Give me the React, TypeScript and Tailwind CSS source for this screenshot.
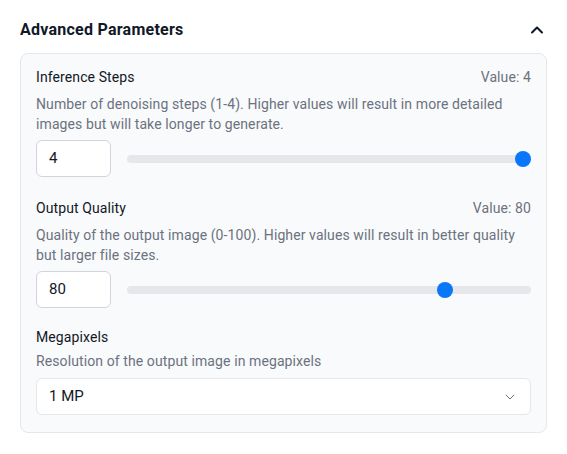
import { ChevronDown, ChevronUp } from "lucide-react";

type SliderProps = {
  value: number;
  min: number;
  max: number;
};

const Slider = ({ value, min, max }: SliderProps) => {
  const pct = ((value - min) / (max - min)) * 100;

  return (
    <div className="relative flex-1 h-2 rounded-full bg-[#e5e7eb]">
      <div
        className="absolute top-1/2 -translate-y-1/2 size-4 rounded-full bg-[#0a76fa]"
        style={{ left: `calc(${pct}% - ${(pct * 16) / 100}px)` }}
      />
    </div>
  );
};

type ParamProps = {
  label: string;
  description: string;
  value: number;
  min: number;
  max: number;
  className?: string;
};

const NumberParam = ({ label, description, value, min, max, className }: ParamProps) => (
  <div className={className}>
    <div className="flex justify-between items-center h-4 leading-4 text-sm tracking-[0.1px]">
      <span className="text-[#111827]">{label}</span>
      <span className="text-[#6b7280]">Value: {value}</span>
    </div>
    <p className="mt-[9px] text-sm leading-5 tracking-[0.1px] text-[#6b7280]">{description}</p>
    <div className="mt-1.5 flex items-center gap-4">
      <div className="w-[75px] h-[37px] flex items-center px-3 bg-white border border-[#d1d5db] rounded-md text-[15px] text-[#111827]">
        {value}
      </div>
      <Slider value={value} min={min} max={max} />
    </div>
  </div>
);

export default function App() {
  return (
    <div className="w-[567px] h-[454px] bg-white px-5 pt-[18px] font-['Roboto',sans-serif]">
      <div className="flex items-center justify-between h-6">
        <h2 className="text-base leading-6 font-bold tracking-[0.25px] text-[#111827]">
          Advanced Parameters
        </h2>
        <ChevronUp size={20} strokeWidth={2.5} className="text-[#111827]" />
      </div>

      <div className="mt-[11px] bg-[#f9fafb] border border-[#e5e7eb] rounded-lg px-[15px] pt-[15px] pb-[17px]">
        <NumberParam
          label="Inference Steps"
          description="Number of denoising steps (1-4). Higher values will result in more detailed images but will take longer to generate."
          value={4}
          min={1}
          max={4}
        />

        <NumberParam
          className="mt-[23px]"
          label="Output Quality"
          description="Quality of the output image (0-100). Higher values will result in better quality but larger file sizes."
          value={80}
          min={0}
          max={100}
        />

        <div className="mt-[21px]">
          <div className="h-4 leading-4 text-sm tracking-[0.1px] text-[#111827]">Megapixels</div>
          <p className="mt-1.5 text-sm leading-5 tracking-[0.1px] text-[#6b7280]">
            Resolution of the output image in megapixels
          </p>
          <div className="mt-[7px] h-[37px] flex items-center justify-between px-3 bg-white border border-[#e5e7eb] rounded-md">
            <span className="text-[15px] text-[#111827]">1 MP</span>
            <ChevronDown size={16} strokeWidth={1.5} className="text-[#6b7280]" />
          </div>
        </div>
      </div>
    </div>
  );
}
